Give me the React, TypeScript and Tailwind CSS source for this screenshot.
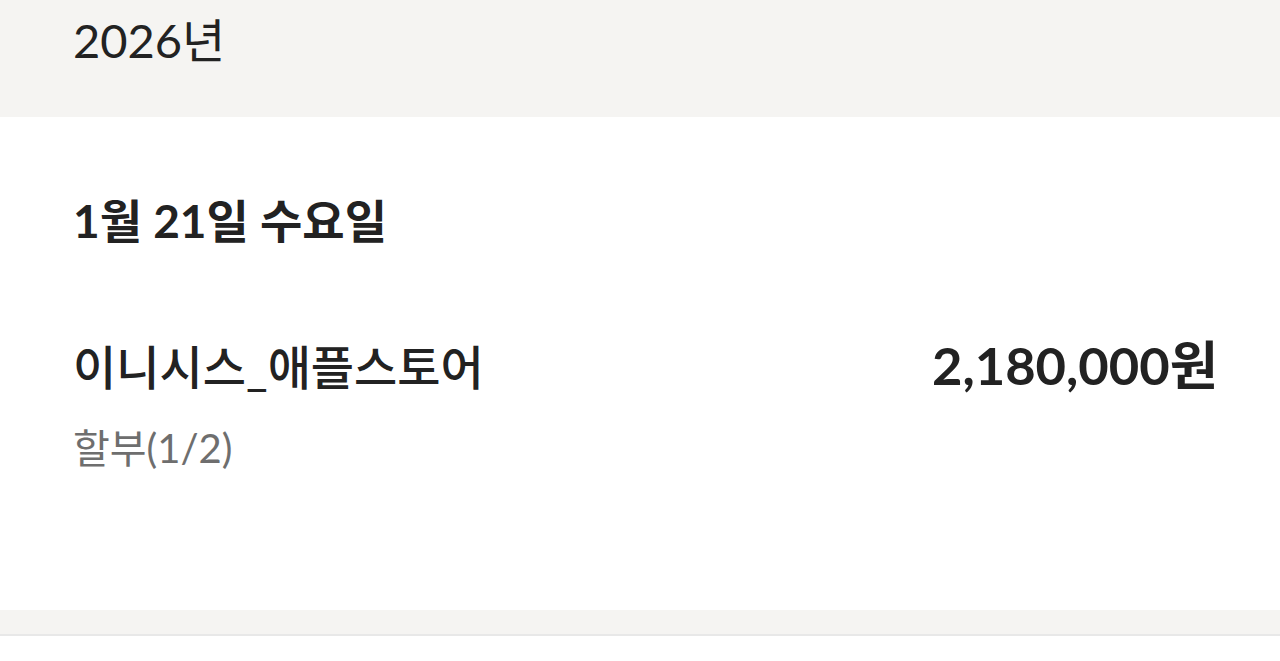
export default function App() {
  return (
    <div className="min-h-[661px] bg-white font-['Lato','Noto_Sans_CJK_KR',sans-serif] text-[#222222]">
      <div className="h-[117px] bg-[#f5f4f2] px-[73px] pt-[17px]">
        <h2 className="text-[47px] leading-none">2026년</h2>
      </div>
      <section className="px-[73px] pt-[81px] pb-[142px]">
        <h3 className="text-[46px] font-bold leading-none">1월 21일 수요일</h3>
        <div className="mt-[100px] flex items-start justify-between">
          <div className="flex flex-col gap-[37px]">
            <span className="text-[47px] font-medium leading-none">이니시스_애플스토어</span>
            <span className="text-[40px] leading-none text-[#6e6e6e]">할부(1/2)</span>
          </div>
          <span className="mr-[-11px] mt-[-5px] text-[52.5px] font-bold leading-none">2,180,000원</span>
        </div>
      </section>
      <div className="h-[26px] border-b-2 border-[#e8e8e8] bg-[#f5f4f2]" />
    </div>
  );
}
